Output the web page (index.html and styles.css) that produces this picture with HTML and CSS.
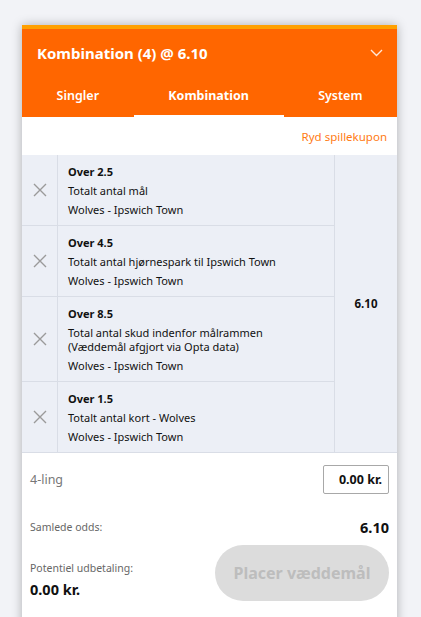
FILE: index.html
```
<!DOCTYPE html>
<html lang="da">
<head>
<meta charset="utf-8">
<title>Spillekupon</title>
<link rel="stylesheet" href="styles.css">
</head>
<body>
<div class="slip">
  <div class="head">
    <div class="title-row">
      <span class="title">Kombination (4) @ 6.10</span>
      <svg class="chev" width="13" height="8" viewBox="0 0 13 8"><path d="M1 1 L6.5 6.5 L12 1" fill="none" stroke="#fff" stroke-opacity="0.85" stroke-width="1.4"/></svg>
    </div>
    <div class="tabs">
      <div class="tab">Singler</div>
      <div class="tab active">Kombination</div>
      <div class="tab">System</div>
    </div>
  </div>
  <div class="clear-row"><span class="clear">Ryd spillekupon</span></div>
  <div class="legs">
    <div class="leg-list">
      <div class="leg">
        <div class="remove"><svg width="14" height="14" viewBox="0 0 14 14"><path d="M1 1 L13 13 M13 1 L1 13" stroke="#9a9a9a" stroke-width="1.4"/></svg></div>
        <div class="info">
          <div class="pick">Over 2.5</div>
          <div class="market">Totalt antal mål</div>
          <div class="event">Wolves - Ipswich Town</div>
        </div>
      </div>
      <div class="leg">
        <div class="remove"><svg width="14" height="14" viewBox="0 0 14 14"><path d="M1 1 L13 13 M13 1 L1 13" stroke="#9a9a9a" stroke-width="1.4"/></svg></div>
        <div class="info">
          <div class="pick">Over 4.5</div>
          <div class="market">Totalt antal hjørnespark til Ipswich Town</div>
          <div class="event">Wolves - Ipswich Town</div>
        </div>
      </div>
      <div class="leg">
        <div class="remove"><svg width="14" height="14" viewBox="0 0 14 14"><path d="M1 1 L13 13 M13 1 L1 13" stroke="#9a9a9a" stroke-width="1.4"/></svg></div>
        <div class="info">
          <div class="pick">Over 8.5</div>
          <div class="market">Total antal skud indenfor målrammen<br>(Væddemål afgjort via Opta data)</div>
          <div class="event">Wolves - Ipswich Town</div>
        </div>
      </div>
      <div class="leg">
        <div class="remove"><svg width="14" height="14" viewBox="0 0 14 14"><path d="M1 1 L13 13 M13 1 L1 13" stroke="#9a9a9a" stroke-width="1.4"/></svg></div>
        <div class="info">
          <div class="pick">Over 1.5</div>
          <div class="market">Totalt antal kort - Wolves</div>
          <div class="event">Wolves - Ipswich Town</div>
        </div>
      </div>
    </div>
    <div class="odds-col">6.10</div>
  </div>
  <div class="foot">
    <div class="stake-row">
      <span class="muted">4-ling</span>
      <div class="stake">0.00 kr.</div>
    </div>
    <div class="odds-row">
      <span class="small">Samlede odds:</span>
      <span class="big">6.10</span>
    </div>
    <div class="pay-row">
      <div class="payout">
        <div class="small">Potentiel udbetaling:</div>
        <div class="big">0.00 kr.</div>
      </div>
      <div class="place">Placer væddemål</div>
    </div>
  </div>
</div>
</body>
</html>
```
FILE: styles.css
```
html, body {
  margin: 0;
  padding: 0;
}
body {
  background: #f2f3f7;
  font-family: "Noto Sans", "Open Sans", sans-serif;
  color: #111;
  height: 617px;
  overflow: hidden;
}
.slip {
  margin: 25px 0 0 22px;
  width: 375px;
  background: #fff;
  box-shadow: 0 0 10px rgba(0, 0, 0, 0.28);
  padding-bottom: 40px;
}
.head {
  background: #ff6600;
  border-top: 4px solid #ffa000;
}
.title-row {
  height: 47px;
  display: flex;
  align-items: center;
  justify-content: space-between;
  padding: 0 14px 0 15px;
}
.title {
  color: #fff;
  font-weight: 700;
  font-size: 15px;
}
.chev {
  display: block;
}
.tabs {
  display: flex;
  height: 41px;
}
.tab {
  flex: 1 1 auto;
  display: flex;
  align-items: center;
  justify-content: center;
  color: #fff;
  font-size: 12.5px;
  font-weight: 600;
  border-bottom: 2px solid transparent;
  box-sizing: border-box;
}
.tab.active {
  border-bottom-color: #fff;
  font-weight: 700;
}
.clear-row {
  height: 38px;
  display: flex;
  align-items: center;
  justify-content: flex-end;
  padding-right: 10px;
}
.clear {
  color: #ff7a12;
  font-size: 11.5px;
}
.legs {
  display: flex;
  background: #eceff6;
  border-bottom: 1px solid #d9dde6;
}
.leg-list {
  flex: 1;
}
.leg {
  display: flex;
  border-bottom: 1px solid #d9dde6;
}
.leg:last-child {
  border-bottom: none;
}
.remove {
  width: 35px;
  border-right: 1px solid #d9dde6;
  display: flex;
  align-items: center;
  justify-content: center;
}
.remove svg {
  display: block;
}
.info {
  padding: 9px 10px 7px;
  font-size: 11px;
  display: flex;
  flex-direction: column;
  gap: 4px;
}
.pick {
  font-weight: 700;
  line-height: 16px;
}
.market {
  line-height: 14px;
}
.event {
  line-height: 16px;
}
.odds-col {
  width: 62px;
  border-left: 1px solid #d9dde6;
  display: flex;
  align-items: center;
  justify-content: center;
  font-size: 11.5px;
  font-weight: 700;
}
.foot {
  padding: 12px 8px 0;
}
.stake-row {
  display: flex;
  justify-content: space-between;
  align-items: center;
}
.muted {
  color: #777;
  font-size: 12.5px;
}
.stake {
  width: 66px;
  height: 29px;
  box-sizing: border-box;
  border: 1px solid #a8a8a8;
  border-radius: 2px;
  display: flex;
  align-items: center;
  justify-content: flex-end;
  padding-right: 6px;
  font-size: 12.5px;
  font-weight: 700;
}
.odds-row {
  margin-top: 23px;
  display: flex;
  justify-content: space-between;
  align-items: center;
  line-height: 20px;
}
.small {
  color: #666;
  font-size: 10.5px;
  line-height: 16px;
}
.big {
  font-size: 14.5px;
  font-weight: 700;
  line-height: 20px;
}
.pay-row {
  margin-top: 8px;
  display: flex;
  justify-content: space-between;
  align-items: flex-end;
}
.payout {
  display: flex;
  flex-direction: column;
  gap: 3px;
  margin-bottom: 2px;
}
.place {
  width: 174px;
  height: 56px;
  border-radius: 28px;
  background: #dcdcdc;
  color: #bdbdbd;
  font-size: 16px;
  font-weight: 700;
  display: flex;
  align-items: center;
  justify-content: center;
}
```
